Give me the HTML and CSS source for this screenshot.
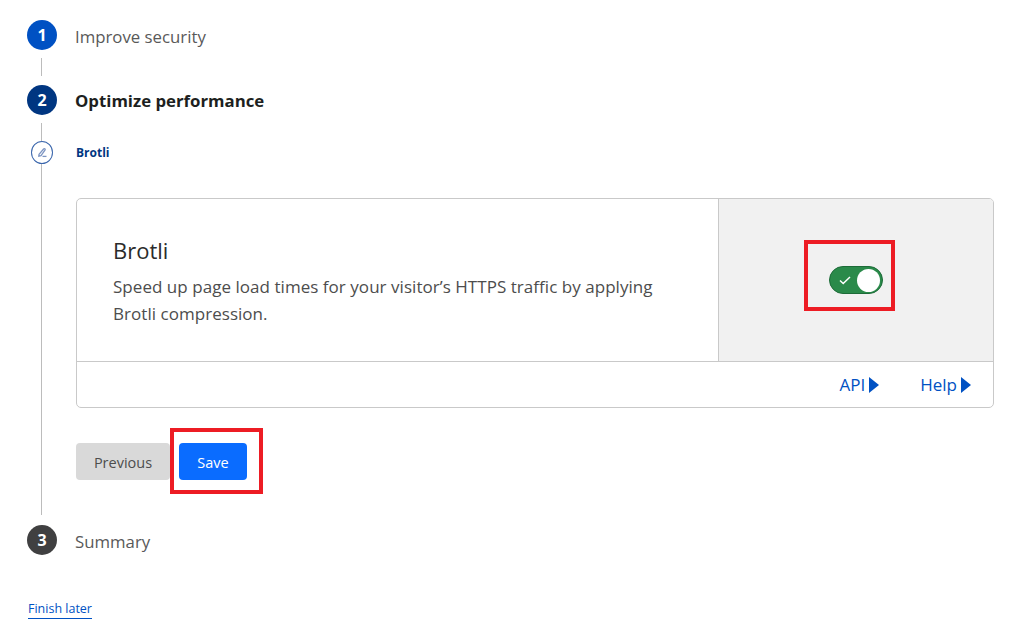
FILE: index.html
```html
<!DOCTYPE html>
<html lang="en">
<head>
  <meta charset="UTF-8">
  <title>Optimize performance</title>
  <link rel="stylesheet" href="styles.css">
</head>
<body>

  <div class="wizard">

    <div class="step step-first">
      <div class="rail">
        <div class="num num-blue">1</div>
        <div class="line"></div>
      </div>
      <div class="step-title">Improve security</div>
    </div>

    <div class="step step-active">
      <div class="rail">
        <div class="num num-navy">2</div>
        <div class="line line-short"></div>
        <div class="sub-num">
          <svg width="13" height="13" viewBox="0 0 13 13" fill="none" stroke="#7d95c2" stroke-width="1.3">
            <path d="M3 8.4 7.6 3c.7-.8 2-.1 1.5 1L5 9.6 2.8 10.2Z"/>
            <path d="M6.5 10.4h4"/>
          </svg>
        </div>
        <div class="line line-long"></div>
      </div>

      <div class="step-body">
        <div class="step-title step-title-bold">Optimize performance</div>
        <div class="sub-title">Brotli</div>

        <div class="card">
          <div class="card-top">
            <div class="card-text">
              <h3>Brotli</h3>
              <p>Speed up page load times for your visitor’s HTTPS traffic by applying Brotli compression.</p>
            </div>
            <div class="card-control">
              <div class="toggle">
                <svg width="12" height="9" viewBox="0 0 12 9" fill="none" stroke="#fff" stroke-width="1.5">
                  <path d="M1 4.5 4.2 7.5 11 1"/>
                </svg>
                <span class="knob"></span>
                <div class="red-box red-box-toggle"></div>
              </div>
            </div>
          </div>
          <div class="card-links">
            <a href="#">API<span class="arrow"></span></a>
            <a href="#">Help<span class="arrow"></span></a>
          </div>
        </div>

        <div class="buttons">
          <button class="btn btn-grey">Previous</button>
          <div class="red-box red-box-save">
            <button class="btn btn-blue">Save</button>
          </div>
        </div>
      </div>
    </div>

    <div class="step">
      <div class="rail">
        <div class="num num-dark">3</div>
      </div>
      <div class="step-title">Summary</div>
    </div>

  </div>

  <a class="finish" href="#">Finish later</a>

</body>
</html>
```

FILE: styles.css
```css
body {
  margin: 0;
  padding: 20px 30px 0 27px;
  font-family: "Open Sans", "Noto Sans", sans-serif;
  background-color: white;
  color: #36393a;
}

.step {
  display: flex;
  gap: 18px;
}

.step-first {
  height: 65px;
}

.step-active {
  padding-bottom: 10px;
}

.rail {
  display: flex;
  flex-direction: column;
  align-items: center;
  width: 30px;
  flex-shrink: 0;
}

.num {
  width: 30px;
  height: 30px;
  border-radius: 50%;
  color: white;
  font-size: 16px;
  font-weight: 700;
  line-height: 30px;
  text-align: center;
}

.num-blue { background-color: #0051c3; }
.num-navy { background-color: #003681; }
.num-dark { background-color: #404041; }

.line {
  width: 1px;
  margin-right: 2px;
  background-color: #bcbcbc;
}

.step-first .line {
  height: 18px;
  margin-top: 8px;
}

.line-short {
  height: 18px;
  margin-top: 8px;
}

.line-long {
  flex: 1;
}

.sub-num {
  display: flex;
  align-items: center;
  justify-content: center;
  width: 20px;
  height: 21px;
  border: 1px solid #3a66ac;
  border-radius: 50%;
}

.step-title {
  font-size: 16.8px;
  line-height: 33px;
  color: #595959;
}

.step-title-bold {
  line-height: 31px;
  color: #1d1f20;
  font-weight: 700;
}

.step-body {
  flex: 1;
}

.sub-title {
  margin-top: 27px;
  height: 55px;
  padding-left: 1px;
  font-size: 12px;
  font-weight: 700;
  line-height: 20px;
  color: #003681;
}

.card {
  margin-left: 1px;
  border: 1px solid #c9c9c9;
  border-radius: 5px;
  overflow: hidden;
}

.card-top {
  display: flex;
  height: 162px;
  border-bottom: 1px solid #c9c9c9;
}

.card-text {
  flex: 1;
  padding: 36px 36px 0;
}

.card-text h3 {
  margin: 0 0 8px;
  font-size: 22px;
  font-weight: 500;
  line-height: 30px;
  color: #2b2b2b;
}

.card-text p {
  margin: 0;
  max-width: 550px;
  font-size: 17px;
  line-height: 27px;
  color: #4d4d4d;
  letter-spacing: 0.04px;
}

.card-control {
  display: flex;
  align-items: center;
  justify-content: center;
  width: 275px;
  box-sizing: border-box;
  background-color: #f1f1f1;
  border-left: 1px solid #c9c9c9;
}

.red-box {
  box-sizing: border-box;
  border: 4px solid #ed1c24;
}

.toggle {
  position: relative;
  display: flex;
  align-items: center;
  justify-content: space-between;
  width: 54px;
  height: 28px;
  box-sizing: border-box;
  padding: 0 2px 0 9px;
  background-color: #2a8a4a;
  border: 1px solid #1d6b38;
  border-radius: 14px;
}

.knob {
  width: 23px;
  height: 23px;
  border-radius: 50%;
  background-color: white;
}

.red-box-toggle {
  position: absolute;
  left: -26px;
  top: -27px;
  width: 91px;
  height: 71px;
}

.card-links {
  display: flex;
  justify-content: flex-end;
  gap: 41px;
  height: 45px;
  padding-right: 22px;
  line-height: 46px;
}

.card-links a {
  display: flex;
  align-items: center;
  gap: 4px;
  color: #0051c3;
  font-size: 17px;
  text-decoration: none;
}

.arrow {
  width: 0;
  height: 0;
  border-left: 10px solid #0051c3;
  border-top: 8px solid transparent;
  border-bottom: 8px solid transparent;
}

.buttons {
  display: flex;
  align-items: center;
  margin: 20px 0 21px 1px;
}

.btn {
  height: 37px;
  padding-top: 3px;
  border: none;
  border-radius: 4px;
  font-family: inherit;
  font-size: 14.5px;
}

.btn-grey {
  width: 94px;
  background-color: #d9d9d9;
  color: #4d4d4d;
}

.btn-blue {
  width: 68px;
  background-color: #0a6cff;
  color: white;
}

.red-box-save {
  display: flex;
  align-items: center;
  width: 93px;
  height: 66px;
  padding-left: 5px;
}

.finish {
  display: inline-block;
  margin-top: 42px;
  margin-left: 1px;
  color: #0051c3;
  font-size: 12.5px;
  line-height: 18px;
  text-decoration: none;
  border-bottom: 1px solid #0051c3;
}
```
